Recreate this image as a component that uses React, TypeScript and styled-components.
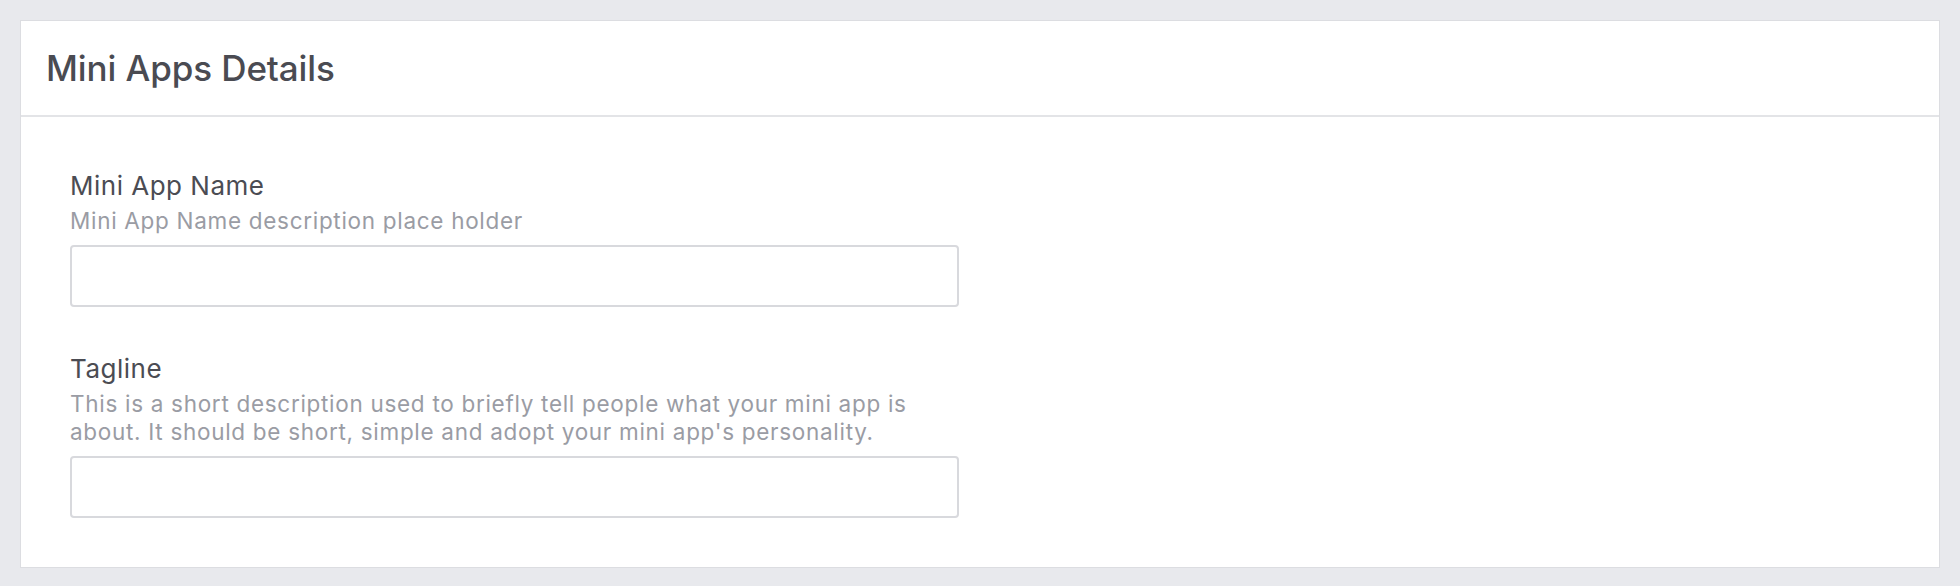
import React from 'react';
import styled, { createGlobalStyle } from 'styled-components';

const GlobalStyle = createGlobalStyle`
  html, body {
    margin: 0;
    padding: 0;
    background: #e8e9ed;
    font-family: Inter, "Noto Sans", sans-serif;
  }
  * {
    box-sizing: border-box;
  }
`;

const Page = styled.div`
  padding: 20px 20px 19px;
  min-height: 586px;
`;

const Card = styled.section`
  background: #ffffff;
  border: 1px solid #dcdde1;
`;

const CardHeader = styled.header`
  height: 96px;
  display: flex;
  align-items: center;
  padding: 0 25px;
  border-bottom: 2px solid #e3e4e7;
  h2 {
    margin: 0;
    font-size: 35px;
    font-weight: 500;
    color: #4a4b52;
    letter-spacing: -0.1px;
  }
`;

const CardBody = styled.div`
  padding: 52px 49px 49px;
  display: flex;
  flex-direction: column;
  gap: 45px;
`;

const Field = styled.div`
  width: 889px;
  display: flex;
  flex-direction: column;
`;

const Label = styled.label`
  font-size: 26px;
  line-height: 34px;
  font-weight: 400;
  letter-spacing: 0.5px;
  color: #4b4c53;
`;

const Hint = styled.p`
  margin: 4px 0 0;
  font-size: 22.5px;
  line-height: 28px;
  letter-spacing: 0.7px;
  color: #9a9ca4;
`;

const Input = styled.input`
  margin-top: 10px;
  height: 62px;
  width: 100%;
  border: 2px solid #d8d9dd;
  border-radius: 4px;
  background: #ffffff;
  font-family: inherit;
  font-size: 22px;
  padding: 0 16px;
  outline: none;
`;

const fields = [
  {
    id: 'name',
    label: 'Mini App Name',
    hint: 'Mini App Name description place holder',
  },
  {
    id: 'tagline',
    label: 'Tagline',
    hint: "This is a short description used to briefly tell people what your mini app is about. It should be short, simple and adopt your mini app's personality.",
  },
];

const App = () => {
  return (
    <>
      <GlobalStyle />
      <Page>
        <Card>
          <CardHeader>
            <h2>Mini Apps Details</h2>
          </CardHeader>
          <CardBody>
            {fields.map((f) => (
              <Field key={f.id}>
                <Label htmlFor={f.id}>{f.label}</Label>
                <Hint>{f.hint}</Hint>
                <Input id={f.id} type="text" />
              </Field>
            ))}
          </CardBody>
        </Card>
      </Page>
    </>
  );
};

export default App;
